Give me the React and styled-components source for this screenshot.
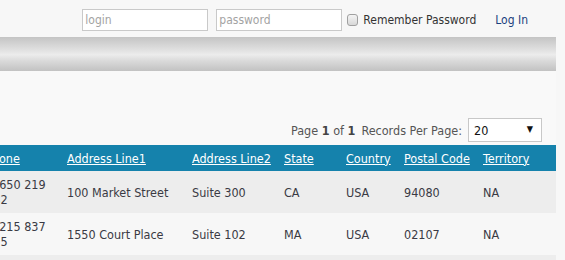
import styled, { createGlobalStyle } from "styled-components";

const GlobalStyle = createGlobalStyle`
  html, body {
    margin: 0;
    padding: 0;
    background: #f7f7f7;
    font-family: "DejaVu Sans Condensed", "Liberation Sans", Arial, sans-serif;
    font-size: 12px;
    color: #3a3a44;
  }
`;

const Page = styled.div`
  width: 565px;
  height: 260px;
  overflow: hidden;
`;

const TopBar = styled.div`
  height: 37px;
  box-sizing: border-box;
  padding: 9px 37px 0 0;
  display: flex;
  justify-content: flex-end;
  align-items: flex-start;
`;

const TextInput = styled.input`
  width: 126px;
  height: 22px;
  box-sizing: border-box;
  margin: 0 8px 0 0;
  padding: 0 2px;
  border: 1px solid #c9c9c9;
  background: #fff;
  font-family: inherit;
  font-size: 12px;
  outline: none;
  &::placeholder {
    color: #a3a3a3;
  }
`;

const Check = styled.input`
  appearance: none;
  width: 11px;
  height: 12px;
  margin: 5px 5px 0 -3px;
  border: 1px solid #a0a0a0;
  border-radius: 3px;
  background: linear-gradient(#f4f4f4, #d8d8d8);
  box-sizing: border-box;
`;

const Remember = styled.label`
  line-height: 22px;
  color: #333;
  margin-right: 19px;
`;

const LogIn = styled.a`
  line-height: 22px;
  color: #1b3f7e;
  text-decoration: none;
`;

const GradientBar = styled.div`
  width: 556px;
  height: 34px;
  background: linear-gradient(#c4c4c4 0%, #dedede 35%, #ececec 52%, #dadada 70%, #c2c2c2 100%);
`;

const Panel = styled.div`
  width: 556px;
  height: 189px;
  background: #f9f9f9;
  padding-top: 47px;
  box-sizing: border-box;
  font-size: 12.5px;
`;

const Pager = styled.div`
  display: flex;
  justify-content: flex-end;
  align-items: center;
  height: 24px;
  padding-right: 14px;
  color: #555;
  gap: 6px;
`;

const Strong = styled.b`
  color: #444;
`;

const SelectWrap = styled.div`
  position: relative;
  width: 74px;
  height: 24px;
`;

const Select = styled.select`
  appearance: none;
  width: 100%;
  height: 100%;
  border: 1px solid #c8c8c8;
  background: #fff;
  padding: 0 0 0 5px;
  font-family: inherit;
  font-size: 12.5px;
  color: #111;
  outline: none;
`;

const Arrow = styled.span`
  position: absolute;
  right: 9px;
  top: 6px;
  font-size: 9px;
  color: #111;
  pointer-events: none;
`;

const TableClip = styled.div`
  width: 556px;
  overflow: hidden;
  margin-top: 3px;
`;

const Table = styled.table`
  margin-left: -27px;
  width: 583px;
  border-collapse: collapse;
  table-layout: fixed;
`;

const Th = styled.th`
  background: #1582ac;
  color: #fff;
  font-weight: normal;
  text-align: left;
  height: 26px;
  padding: 0 0 0 ${(p) => (p.$first ? 12 : 6)}px;
  text-decoration: underline;
  white-space: nowrap;
`;

const Row = styled.tr`
  background: ${(p) => (p.$alt ? "#f7f7f7" : "#ededed")};
`;

const Td = styled.td`
  height: 42px;
  padding: 0 4px 0 6px;
  line-height: 15px;
  vertical-align: middle;
`;

const columns = [
  { key: "phone", label: "Phone", width: 88 },
  { key: "addr1", label: "Address Line1", width: 125 },
  { key: "addr2", label: "Address Line2", width: 92 },
  { key: "state", label: "State", width: 62 },
  { key: "country", label: "Country", width: 58 },
  { key: "postal", label: "Postal Code", width: 79 },
  { key: "territory", label: "Territory", width: 79 },
];

const rows = [
  { phone: "+1 650 219 4782", addr1: "100 Market Street", addr2: "Suite 300", state: "CA", country: "USA", postal: "94080", territory: "NA" },
  { phone: "+1 215 837 0825", addr1: "1550 Court Place", addr2: "Suite 102", state: "MA", country: "USA", postal: "02107", territory: "NA" },
  { phone: "+1 212 555 1957", addr1: "523 East 53rd Street", addr2: "apt. 5A", state: "NY", country: "USA", postal: "10022", territory: "NA" },
];

export default function App() {
  return (
    <Page>
      <GlobalStyle />
      <TopBar>
        <TextInput placeholder="login" />
        <TextInput type="password" placeholder="password" />
        <Check type="checkbox" id="remember" />
        <Remember htmlFor="remember">Remember Password</Remember>
        <LogIn href="#">Log In</LogIn>
      </TopBar>
      <GradientBar />
      <Panel>
        <Pager>
          <span>
            Page <Strong>1</Strong> of <Strong>1</Strong>
          </span>
          <span>Records Per Page:</span>
          <SelectWrap>
            <Select defaultValue="20">
              <option>10</option>
              <option>20</option>
              <option>50</option>
            </Select>
            <Arrow>▼</Arrow>
          </SelectWrap>
        </Pager>
        <TableClip>
          <Table>
            <colgroup>
              {columns.map((c) => (
                <col key={c.key} style={{ width: c.width }} />
              ))}
            </colgroup>
            <thead>
              <tr>
                {columns.map((c, i) => (
                  <Th key={c.key} $first={i === 0}>
                    {c.label}
                  </Th>
                ))}
              </tr>
            </thead>
            <tbody>
              {rows.map((r, i) => (
                <Row key={i} $alt={i % 2 === 1}>
                  {columns.map((c) => (
                    <Td key={c.key}>{r[c.key]}</Td>
                  ))}
                </Row>
              ))}
            </tbody>
          </Table>
        </TableClip>
      </Panel>
    </Page>
  );
}
